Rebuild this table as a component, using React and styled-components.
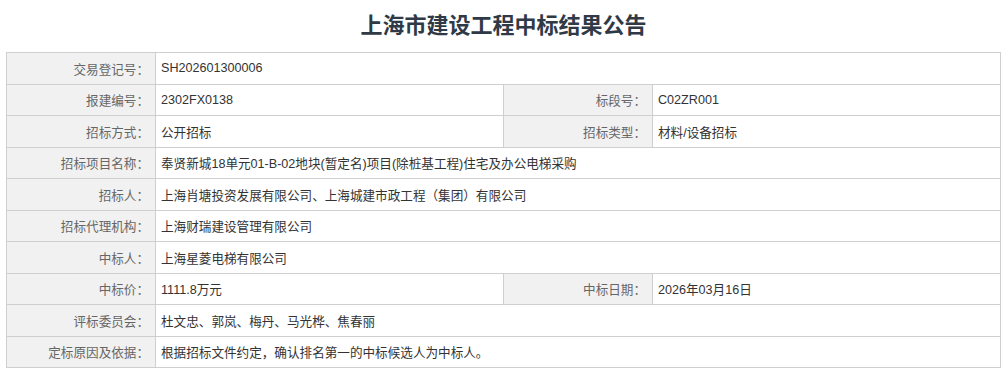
import React from "react";
import styled, { createGlobalStyle } from "styled-components";

const Global = createGlobalStyle`
  html, body { margin: 0; padding: 0; background: #fff; }
  body { font-family: "Liberation Sans", "Noto Sans CJK SC", sans-serif; }
`;

const Page = styled.div`
  width: 995px;
  margin: 0 6px;
`;

const Title = styled.h1`
  margin: 0;
  height: 52px;
  line-height: 52px;
  text-align: center;
  font-size: 22px;
  font-weight: bold;
  color: #2f3a46;
  font-family: "Liberation Sans", "Noto Sans CJK SC", sans-serif;
`;

const Table = styled.div`
  border-left: 1px solid #cfcfcf;
  border-top: 1px solid #cfcfcf;
  box-shadow: 0 1px 0 #dedede;
`;

const Row = styled.div`
  display: grid;
  grid-template-columns: ${(p) => (p.$split ? "149px 348px 149px 1fr" : "149px 1fr")};
  height: 31.5px;
`;

const Cell = styled.div`
  display: flex;
  align-items: center;
  box-sizing: border-box;
  border-right: 1px solid #cfcfcf;
  border-bottom: 1px solid #cfcfcf;
  font-size: 12.6px;
  white-space: nowrap;
  overflow: hidden;
`;

const Label = styled(Cell)`
  justify-content: flex-end;
  padding-right: 6px;
  background: #f1f1f1;
  color: #666;
`;

const Value = styled(Cell)`
  padding-left: 5px;
  color: #333;
`;

const rows = [
  [["交易登记号：", "SH202601300006"]],
  [["报建编号：", "2302FX0138"], ["标段号：", "C02ZR001"]],
  [["招标方式：", "公开招标"], ["招标类型：", "材料/设备招标"]],
  [["招标项目名称：", "奉贤新城18单元01-B-02地块(暂定名)项目(除桩基工程)住宅及办公电梯采购"]],
  [["招标人：", "上海肖塘投资发展有限公司、上海城建市政工程（集团）有限公司"]],
  [["招标代理机构：", "上海财瑞建设管理有限公司"]],
  [["中标人：", "上海星菱电梯有限公司"]],
  [["中标价：", "1111.8万元"], ["中标日期：", "2026年03月16日"]],
  [["评标委员会：", "杜文忠、郭岚、梅丹、马光桦、焦春丽"]],
  [["定标原因及依据：", "根据招标文件约定，确认排名第一的中标候选人为中标人。"]],
];

export default function App() {
  return (
    <Page>
      <Global />
      <Title>上海市建设工程中标结果公告</Title>
      <Table>
        {rows.map((pairs, i) => (
          <Row key={i} $split={pairs.length > 1}>
            {pairs.map(([l, v], j) => (
              <React.Fragment key={j}>
                <Label>{l}</Label>
                <Value>{v}</Value>
              </React.Fragment>
            ))}
          </Row>
        ))}
      </Table>
    </Page>
  );
}
